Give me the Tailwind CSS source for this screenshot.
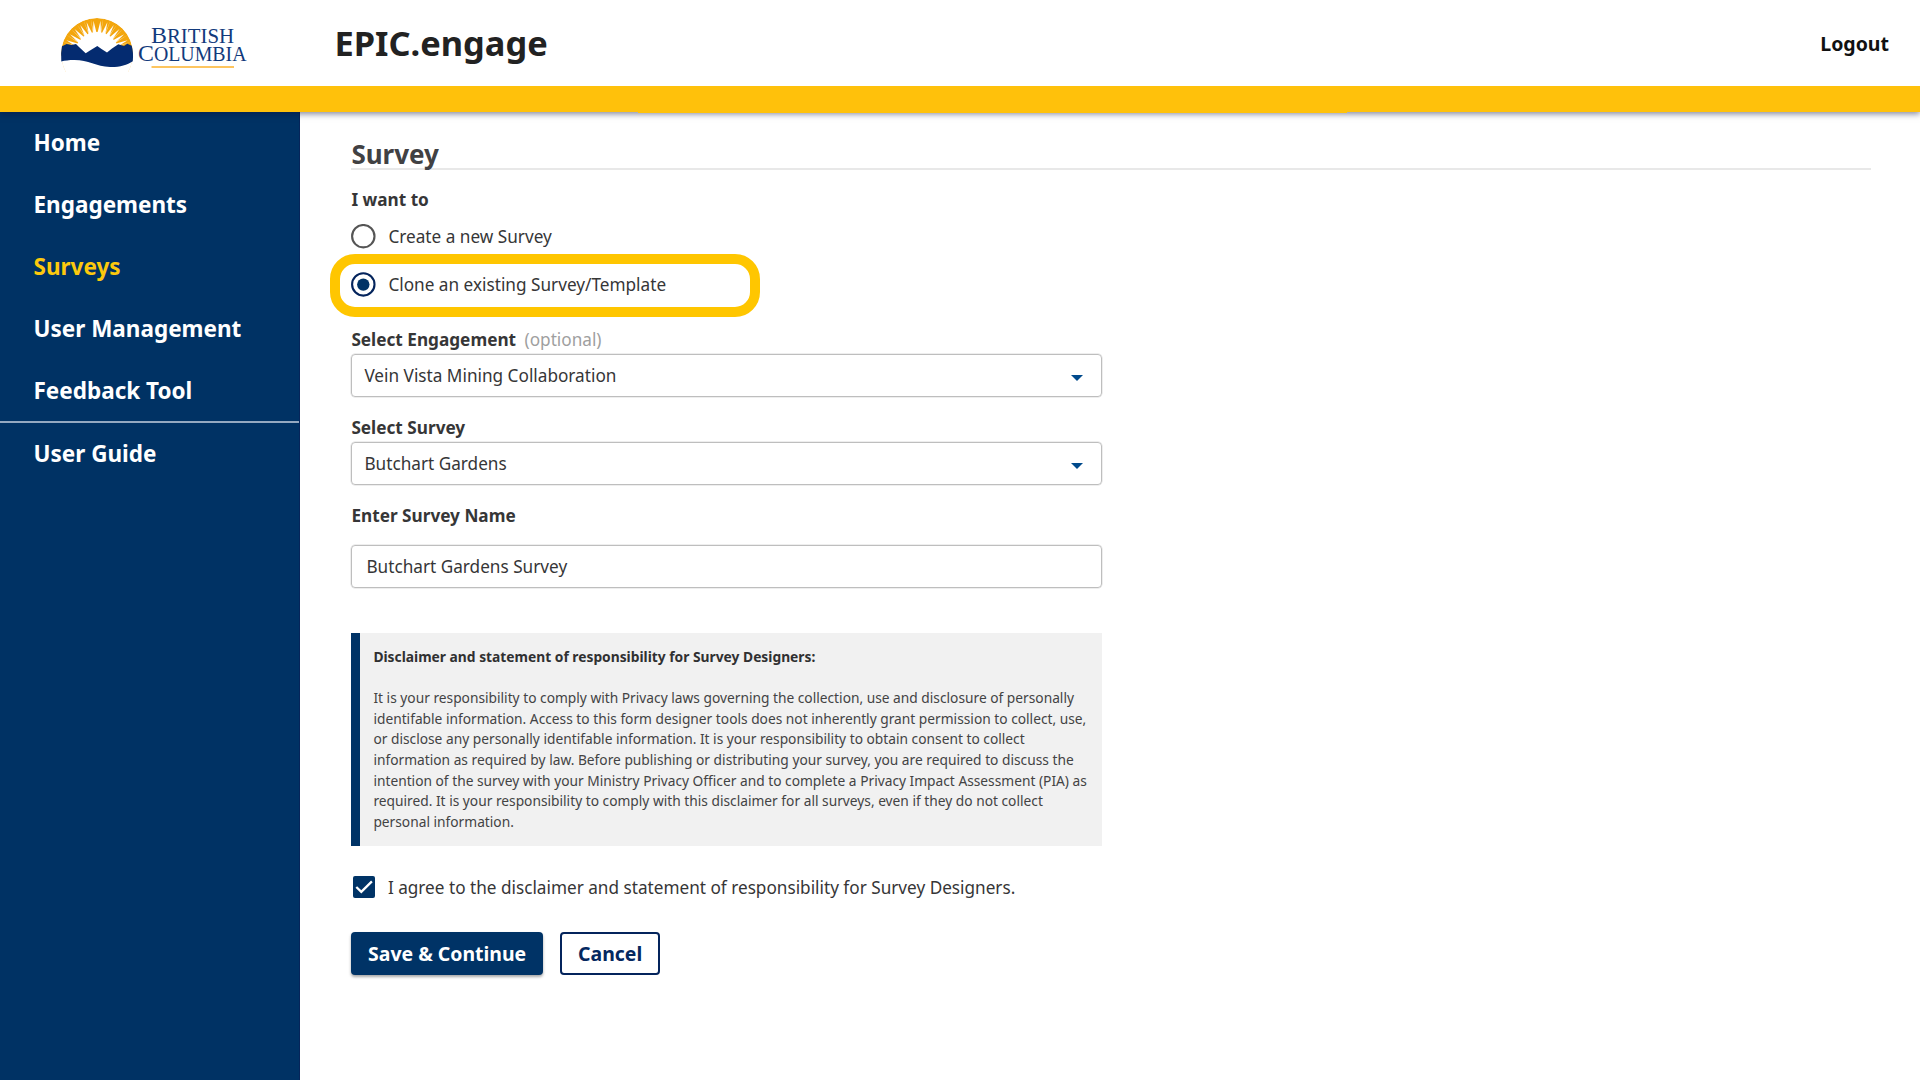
<!DOCTYPE html>
<html lang="en">
<head>
<meta charset="utf-8">
<title>EPIC.engage</title>
<script src="https://cdn.jsdelivr.net/npm/@tailwindcss/browser@4"></script>
</head>
<body class="flex h-[1080px] w-[1920px] flex-col overflow-hidden bg-white font-['Noto_Sans',sans-serif] text-[17.21px] leading-6 text-[#363637]">

<header class="relative z-10 h-28 shrink-0 border-b-[26px] border-[#ffc10b] bg-white shadow-[0_2px_6px_rgba(10,15,60,0.5)]">
  <div class="flex h-[86px] items-center pr-[31px]">
    <svg class="ml-14 h-[58px] w-[200px]" viewBox="56 14 200 58" role="img" aria-label="British Columbia">
      <defs>
        <clipPath id="sun"><circle cx="97" cy="54" r="36"/></clipPath>
        <path id="gap" d="M97 20.5 L94.9 35 L99.1 35Z" fill="#fff"/>
        <path id="thin" d="M97 18 L96.5 35 L97.5 35Z" fill="#fff" fill-opacity=".65"/>
      </defs>
      <g clip-path="url(#sun)">
        <circle cx="97" cy="54" r="36" fill="#f3a60d"/>
        <circle cx="97" cy="54" r="22" fill="#fff"/>
        <use href="#gap" transform="rotate(-78 97 54)"/><use href="#gap" transform="rotate(-66 97 54)"/>
        <use href="#gap" transform="rotate(-54 97 54)"/><use href="#gap" transform="rotate(-42 97 54)"/>
        <use href="#gap" transform="rotate(-30 97 54)"/><use href="#gap" transform="rotate(-18 97 54)"/>
        <use href="#gap" transform="rotate(-6 97 54)"/><use href="#gap" transform="rotate(6 97 54)"/>
        <use href="#gap" transform="rotate(18 97 54)"/><use href="#gap" transform="rotate(30 97 54)"/>
        <use href="#gap" transform="rotate(42 97 54)"/><use href="#gap" transform="rotate(54 97 54)"/>
        <use href="#gap" transform="rotate(66 97 54)"/><use href="#gap" transform="rotate(78 97 54)"/>
        <use href="#thin" transform="rotate(-70 97 54)"/><use href="#thin" transform="rotate(-58 97 54)"/>
        <use href="#thin" transform="rotate(-46 97 54)"/><use href="#thin" transform="rotate(-34 97 54)"/>
        <use href="#thin" transform="rotate(-22 97 54)"/><use href="#thin" transform="rotate(-10 97 54)"/>
        <use href="#thin" transform="rotate(10 97 54)"/><use href="#thin" transform="rotate(22 97 54)"/>
        <use href="#thin" transform="rotate(34 97 54)"/><use href="#thin" transform="rotate(46 97 54)"/>
        <use href="#thin" transform="rotate(58 97 54)"/><use href="#thin" transform="rotate(70 97 54)"/>
        <path d="M56 56h82v20H56z" fill="#fff"/>
      </g>
      <path d="M62 46.3 L66.7 44 L71.5 45 L76 44 L79 47 L85.7 53.3 L90 50.5 L97.3 46 L101.5 49 L107 52.5 L112 48.5 L118.3 44.3 L124 46 L127.3 43.7 L131.7 45.7 Q133.6 52 132.8 61.2 C127 65 119 67.3 110 67 C96 66.5 88 59.8 74 60 C69 60 65 60.5 61.3 61.5 Q60.5 53 62 46.3Z" fill="#042b70"/>
      <g fill="#123a7c" font-family="Liberation Serif, serif">
        <text x="151" y="43" textLength="83" lengthAdjust="spacingAndGlyphs" font-size="23.5">B<tspan font-size="20.5">RITISH</tspan></text>
        <text x="138" y="61" textLength="108.5" lengthAdjust="spacingAndGlyphs" font-size="24">C<tspan font-size="20">OLUMBIA</tspan></text>
      </g>
      <path d="M151.5 66h82.5v2h-82.5z" fill="#fdc55f"/>
    </svg>
    <h1 class="ml-[78.5px] text-[34.4px] leading-[48px] font-bold text-[#222]">EPIC.engage</h1>
    <a class="ml-auto pt-px text-[19.5px] leading-7 font-bold text-[#111]">Logout</a>
  </div>
</header>

<div class="flex flex-1">
  <aside class="w-[300px] shrink-0 border-r border-[#06255a] bg-[#003264] text-[22.5px] font-bold text-white">
    <nav class="-mt-px">
      <a class="flex h-[61.9px] items-center pt-0.5 pl-[33.5px]">Home</a>
      <a class="flex h-[61.9px] items-center pt-0.5 pl-[33.5px]">Engagements</a>
      <a class="flex h-[61.9px] items-center pt-0.5 pl-[33.5px] text-[#fcc90d]">Surveys</a>
      <a class="flex h-[61.9px] items-center pt-0.5 pl-[33.5px]">User Management</a>
      <a class="flex h-[61.9px] items-center pt-0.5 pl-[33.5px]">Feedback Tool</a>
      <div class="mt-[0.5px] h-0.5 bg-[#94a9c1]"></div>
      <a class="flex h-[60px] items-center pt-0.5 pl-[33.5px]">User Guide</a>
    </nav>
  </aside>

  <main class="flex-1 pt-6 pr-[49px] pl-[51.4px]">
    <h2 class="h-[34px] border-b-2 border-[#e8e8e8] text-[26px] leading-[36px] font-bold text-[#414143]">Survey</h2>

    <form class="w-[751px]">
      <p class="mt-[18px] font-bold">I want to</p>
      <label class="mt-[12px] flex h-6 items-center">
        <svg class="-my-px size-[25px]" viewBox="0 0 25 25"><circle cx="12.3" cy="12.2" r="11.2" fill="none" stroke="#555" stroke-width="2.1"/></svg>
        <span class="ml-3 pt-px">Create a new Survey</span>
      </label>
      <div class="mt-[6px] -ml-[21.5px] flex h-[63px] w-[430px] items-center rounded-[25px] border-10 border-[#ffc600] pb-[2px] pl-[11.5px]">
        <svg class="size-[25px]" viewBox="0 0 25 25"><circle cx="12.3" cy="12.4" r="11.2" fill="none" stroke="#04245c" stroke-width="2.1"/><circle cx="12.3" cy="12.6" r="6.2" fill="#003366"/></svg>
        <span class="ml-3">Clone an existing Survey/Template</span>
      </div>

      <p class="mt-[11px] font-bold">Select Engagement <span class="ml-1 font-normal text-[#9f9f9f]">(optional)</span></p>
      <div class="mt-[2px] flex h-[43px] items-center justify-between rounded-[4px] border border-[#bebebe] pr-[18px] pl-3 shadow-[0_0_0_0.5px_#ddd]">
        <span class="pt-px">Vein Vista Mining Collaboration</span>
        <svg class="mt-1 h-[6px] w-3" viewBox="0 0 12 6"><path d="M0 0h12L6 6z" fill="#004a8c"/></svg>
      </div>

      <p class="mt-[19px] font-bold">Select Survey</p>
      <div class="mt-[2px] flex h-[43px] items-center justify-between rounded-[4px] border border-[#bebebe] pr-[18px] pl-3 shadow-[0_0_0_0.5px_#ddd]">
        <span class="pt-px">Butchart Gardens</span>
        <svg class="mt-1 h-[6px] w-3" viewBox="0 0 12 6"><path d="M0 0h12L6 6z" fill="#004a8c"/></svg>
      </div>

      <p class="mt-[19px] font-bold">Enter Survey Name</p>
      <div class="mt-[17px] flex h-[43px] items-center rounded-[4px] border border-[#bebebe] pt-px pl-[14px] shadow-[0_0_0_0.5px_#ddd]">Butchart Gardens Survey</div>

      <section class="mt-[45px] h-[213px] border-l-9 border-[#003366] bg-[#f1f1f1] pt-[13.6px] pl-[13px] text-[13.76px] leading-[20.65px] whitespace-nowrap text-[#434344]">
        <p class="font-bold text-[#303031] text-[13.8px]">Disclaimer and statement of responsibility for Survey Designers:</p>
        <p class="mt-[20.65px]">It is your responsibility to comply with Privacy laws governing the collection, use and disclosure of personally<br>identifable information. Access to this form designer tools does not inherently grant permission to collect, use,<br>or disclose any personally identifable information. It is your responsibility to obtain consent to collect<br>information as required by law. Before publishing or distributing your survey, you are required to discuss the<br>intention of the survey with your Ministry Privacy Officer and to complete a Privacy Impact Assessment (PIA) as<br>required. It is your responsibility to comply with this disclaimer for all surveys, even if they do not collect<br>personal information.</p>
      </section>

      <label class="mt-[29px] flex h-6 items-center">
        <svg class="ml-[1.5px] size-[22px]" viewBox="0 0 22 22"><rect width="22" height="22" rx="2" fill="#003366"/><path d="M3.3 11 L8.3 15.9 L18.9 5.4" fill="none" stroke="#fff" stroke-width="2.3"/></svg>
        <span class="ml-[13px] pt-[2px] text-[17.18px]">I agree to the disclaimer and statement of responsibility for Survey Designers.</span>
      </label>

      <div class="mt-[33px] flex gap-[17px] text-[19.45px] font-bold">
        <button type="button" class="h-[43px] w-[191.5px] rounded-[4px] bg-[#003366] text-white shadow-[0_2px_3px_rgba(0,0,0,0.35)]">Save &amp; Continue</button>
        <button type="button" class="h-[43px] w-[100.5px] rounded-[4px] border-2 border-[#04245c] text-[#04285f]">Cancel</button>
      </div>
    </form>
  </main>
</div>
<div class="absolute top-28 left-[638px] z-20 h-px w-[709px] bg-[#ffc10b]"></div>
</body>
</html>
